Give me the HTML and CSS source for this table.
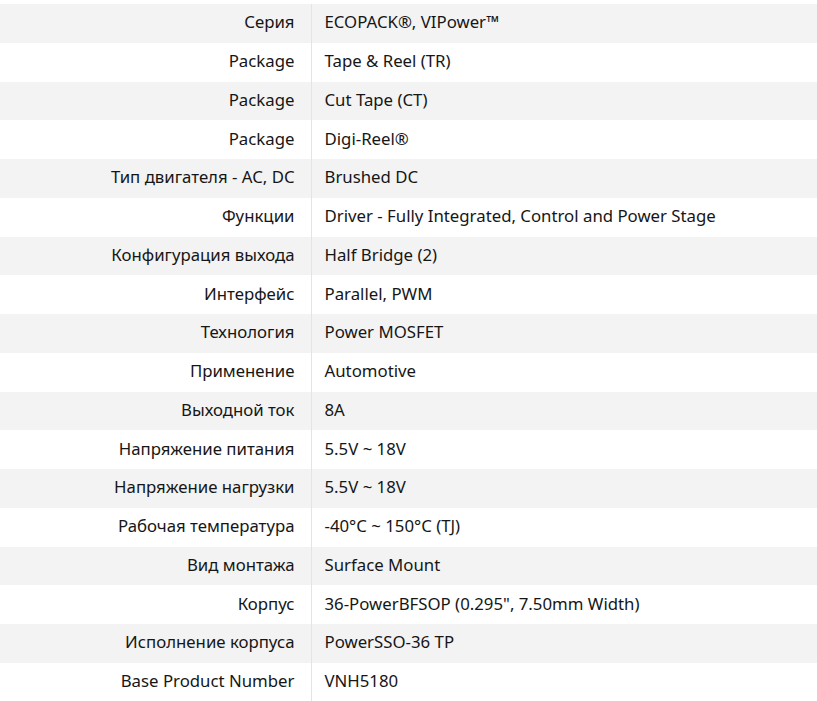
FILE: index.html
```html
<!DOCTYPE html>
<html>
<head>
<meta charset="utf-8">
<link rel="stylesheet" href="styles.css">
</head>
<body>
<table class="spec">
<tbody>
<tr><th>Серия</th><td>ECOPACK®, VIPower™</td></tr>
<tr><th>Package</th><td>Tape &amp; Reel (TR)</td></tr>
<tr><th>Package</th><td>Cut Tape (CT)</td></tr>
<tr><th>Package</th><td>Digi-Reel®</td></tr>
<tr><th>Тип двигателя - AC, DC</th><td>Brushed DC</td></tr>
<tr><th>Функции</th><td>Driver - Fully Integrated, Control and Power Stage</td></tr>
<tr><th>Конфигурация выхода</th><td>Half Bridge (2)</td></tr>
<tr><th>Интерфейс</th><td>Parallel, PWM</td></tr>
<tr><th>Технология</th><td>Power MOSFET</td></tr>
<tr><th>Применение</th><td>Automotive</td></tr>
<tr><th>Выходной ток</th><td>8A</td></tr>
<tr><th>Напряжение питания</th><td>5.5V ~ 18V</td></tr>
<tr><th>Напряжение нагрузки</th><td>5.5V ~ 18V</td></tr>
<tr><th>Рабочая температура</th><td>-40°C ~ 150°C (TJ)</td></tr>
<tr><th>Вид монтажа</th><td>Surface Mount</td></tr>
<tr><th>Корпус</th><td>36-PowerBFSOP (0.295", 7.50mm Width)</td></tr>
<tr><th>Исполнение корпуса</th><td>PowerSSO-36 TP</td></tr>
<tr><th>Base Product Number</th><td>VNH5180</td></tr>
</tbody>
</table>
</body>
</html>
```
FILE: styles.css
```css
html, body {
  margin: 0;
  padding: 0;
  background: #fff;
}
body {
  padding-top: 4px;
  font-family: "Noto Sans", "Open Sans", sans-serif;
  font-size: 16.8px;
  color: #161616;
}
.spec {
  width: 100%;
  border-collapse: collapse;
  border-spacing: 0;
}
.spec tr:nth-child(odd) {
  background: #f3f3f3;
}
.spec th,
.spec td {
  height: 38.75px;
  padding: 0;
  box-sizing: border-box;
  vertical-align: middle;
  font-weight: normal;
  line-height: 20px;
  white-space: nowrap;
}
.spec th {
  width: 311px;
  text-align: right;
  padding-right: 16px;
  padding-bottom: 2px;
  border-right: 1px solid #e4e4e4;
}
.spec td {
  text-align: left;
  padding-left: 13px;
  padding-bottom: 2px;
}
```
